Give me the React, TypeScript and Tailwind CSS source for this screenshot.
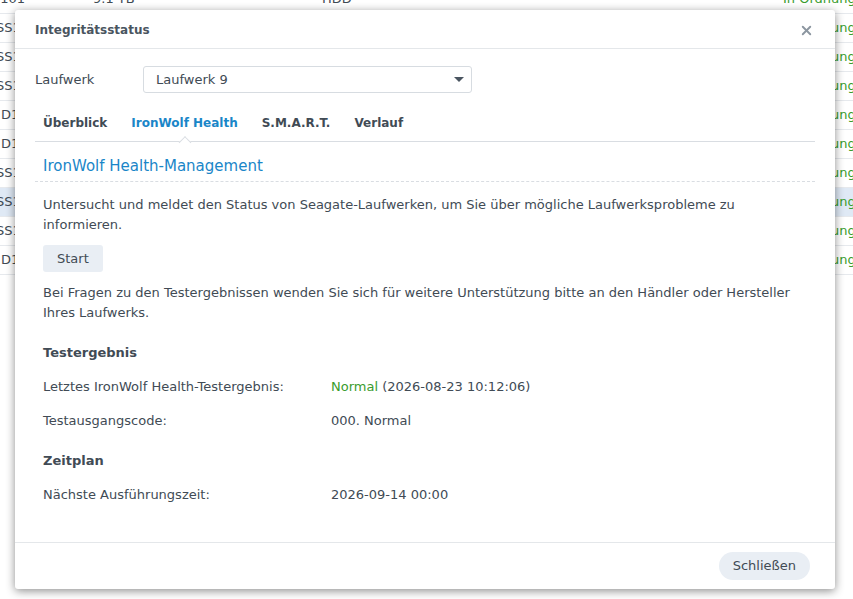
import { X } from 'lucide-react'

const font = { fontFamily: '"DejaVu Sans", Verdana, sans-serif' }

const bgRows = ['101', 'SS1', 'SS1', 'SS1', 'D1', 'D1', 'SS1', 'SS1', 'SS1', 'D1']

function BackgroundTable() {
  return (
    <div className="absolute inset-0 bg-white text-[13px] text-[#414b55]" style={font}>
      <div className="-mt-[15px]">
        {bgRows.map((r, i) => (
          <div
            key={i}
            className={`flex h-[29px] items-center whitespace-nowrap border-b border-[#e6e9ed] ${i === 7 ? 'bg-[#dfe9f5]' : ''}`}
          >
            <span className={`shrink-0 ${r === 'D1' ? 'ml-[1px] w-[92px]' : '-ml-[4px] w-[97px]'}`}>{i === 0 ? '.101' : r}</span>
            <span className="w-[229px] shrink-0">{i === 0 ? '9.1 TB' : ''}</span>
            <span className="w-[229px] shrink-0">{i === 0 ? 'HDD' : ''}</span>
            <span className="w-[232px] shrink-0">{i === 0 ? '-' : ''}</span>
            <span className="text-[#3a9c2d]">In Ordnung</span>
          </div>
        ))}
      </div>
    </div>
  )
}

function Row({ label, children }: { label: string; children: React.ReactNode }) {
  return (
    <div className="flex h-[34px] items-center">
      <span className="w-[288px] shrink-0">{label}</span>
      <span>{children}</span>
    </div>
  )
}

export default function App() {
  return (
    <div className="relative h-[599px] w-[853px] overflow-hidden bg-white">
      <BackgroundTable />
      <div
        className="absolute left-[15px] top-[10px] flex h-[579px] w-[820px] flex-col rounded-[3px] bg-white text-[13px] text-[#414b55] shadow-[0_2px_10px_rgba(0,0,0,0.45)]"
        style={font}
      >
        <div className="flex h-[39px] shrink-0 items-center justify-between border-b border-[#e4e7ea] pl-5 pr-[21px] pt-[2px]">
          <span className="text-[12px] font-bold text-[#4a5560]">Integritätsstatus</span>
          <X size={15} strokeWidth={3} className="text-[#8c96a0]" />
        </div>

        <div className="flex-1 px-5">
          <div className="mt-[17px] flex items-center">
            <span className="w-[108px] shrink-0">Laufwerk</span>
            <div className="flex h-[27px] w-[329px] items-center justify-between rounded-[3px] border border-[#d7dce1] pl-3 pr-[7px]">
              <span>Laufwerk 9</span>
              <span className="h-0 w-0 border-x-[5px] border-t-[5px] border-x-transparent border-t-[#4a5560]" />
            </div>
          </div>

          <div className="relative mt-[11px] flex h-[38px] items-center gap-2 border-b border-[#d9dde2] text-[12px] font-bold">
            <span className="px-2">Überblick</span>
            <span className="relative px-2 text-[#1a86c8]">
              IronWolf Health
              <span className="absolute left-1/2 top-[24px] h-[9px] w-[9px] -translate-x-1/2 rotate-45 border-l border-t border-[#d9dde2] bg-white" />
            </span>
            <span className="px-2">S.M.A.R.T.</span>
            <span className="px-2">Verlauf</span>
          </div>

          <div className="flex h-[40px] items-end border-b border-dashed border-[#d9dde2] px-2 pb-[4px] text-[15px] text-[#1a86c8]">
            IronWolf Health-Management
          </div>

          <div className="px-2">
            <p className="mt-[13px] leading-[20px]">
              Untersucht und meldet den Status von Seagate-Laufwerken, um Sie über mögliche Laufwerksprobleme zu informieren.
            </p>
            <button className="mt-[10px] h-[27px] rounded-[3px] bg-[#e9eef4] px-[14px]">Start</button>
            <p className="mt-[11px] leading-[20px]">
              Bei Fragen zu den Testergebnissen wenden Sie sich für weitere Unterstützung bitte an den Händler oder Hersteller Ihres Laufwerks.
            </p>

            <div className="mt-[20px] flex h-[20px] items-center font-bold">Testergebnis</div>
            <div className="mt-[7px]">
              <Row label="Letztes IronWolf Health-Testergebnis:">
                <span className="text-[#3a9c2d]">Normal</span> (2026-08-23 10:12:06)
              </Row>
              <Row label="Testausgangscode:">000. Normal</Row>
            </div>
            <div className="mt-[13px] flex h-[20px] items-center font-bold">Zeitplan</div>
            <div className="mt-[7px]">
              <Row label="Nächste Ausführungszeit:">2026-09-14 00:00</Row>
            </div>
          </div>
        </div>

        <div className="flex h-[47px] shrink-0 items-center justify-end border-t border-[#e4e7ea] pr-[25px]">
          <button className="h-[28px] rounded-full bg-[#e9eef4] px-[14px]">Schließen</button>
        </div>
      </div>
    </div>
  )
}
